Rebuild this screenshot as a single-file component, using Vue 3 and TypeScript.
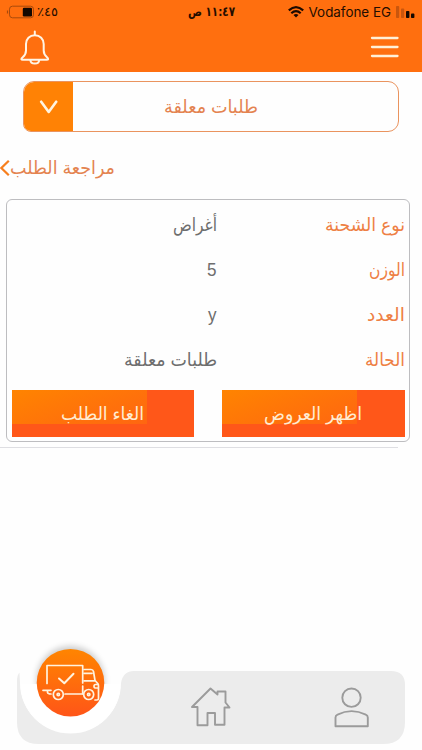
<script setup lang="ts">
import { h } from 'vue'

interface Row {
  label: string
  labelWidth: number
  value: string
  valueWidth: number
}

interface Action {
  text: string
  width: number
}

const rows: Row[] = [
  { label: 'نوع الشحنة', labelWidth: 80, value: 'أغراض', valueWidth: 44 },
  { label: 'الوزن', labelWidth: 36, value: '5', valueWidth: 9.5 },
  { label: 'العدد', labelWidth: 38, value: 'y', valueWidth: 8.5 },
  { label: 'الحالة', labelWidth: 40, value: 'طلبات معلقة', valueWidth: 93 },
]

const actions: Action[] = [
  { text: 'الغاء الطلب', width: 83 },
  { text: 'اظهر العروض', width: 98 },
]

// One line of text condensed or widened to a given width.
const FitText = (props: { text: string; width: number }) =>
  h('svg', { width: props.width, height: 30, overflow: 'visible', style: 'display:block;flex:none' }, [
    h(
      'text',
      {
        x: props.width / 2,
        y: 21,
        'text-anchor': 'middle',
        textLength: props.width,
        lengthAdjust: 'spacingAndGlyphs',
        fill: 'currentColor',
      },
      props.text,
    ),
  ])
FitText.props = ['text', 'width']
</script>

<template>
  <div class="screen">
    <header class="header">
      <div class="status">
        <div class="battery-group">
          <svg class="battery" width="28" height="14" viewBox="0 0 28 14">
            <path d="M1.500 5.5v3" stroke="#a84a0c" stroke-width="1.2" />
            <rect x="3.500" y="1.2" width="24" height="11.6" rx="3" fill="none" stroke="#a84a0c" stroke-width="1" />
            <rect x="16.800" y="2.8" width="9.2" height="8.6" rx="1.2" fill="#140800" />
          </svg>
          <FitText class="percent" text="٪٤٥" :width="21" />
        </div>
        <FitText class="clock" text="١١:٤٧ ص" :width="47" />
        <div class="carrier">
          <svg width="16" height="12" viewBox="0 0 16 12" fill="none" stroke="#1c0a00" stroke-width="2.2">
            <path d="M.8 4.4Q8-2 15.2 4.4" />
            <path d="M3.3 7.2Q8 3 12.7 7.2" />
            <path d="M5.5 9 8 11.6 10.5 9Q8 7 5.5 9Z" fill="#1c0a00" stroke="none" />
          </svg>
          <span class="network">Vodafone EG</span>
          <svg width="19" height="12" viewBox="0 0 19 12">
            <rect x="0" y="0" width="3.2" height="12" rx=".8" fill="#c9560d" />
            <rect x="5" y="2.5" width="3.2" height="9.5" rx=".8" fill="#c9560d" />
            <rect x="10" y="5" width="3.4" height="7" rx=".8" fill="#140800" />
            <rect x="15" y="7.6" width="3.4" height="4.4" rx=".8" fill="#140800" />
          </svg>
        </div>
      </div>
      <div class="toolbar">
        <svg width="30" height="36" viewBox="0 0 30 36" fill="none" stroke="#fff4e4" stroke-width="2" stroke-linecap="round" stroke-linejoin="round">
          <path d="M14.8 1.5v3.6M14.8 5.2C9.6 5.2 6 9 6 14v6.500C6 24 4.800 25.500 2.700 27.300C.6 29.200 1.200 29.700 2.800 29.700H26.600C28.400 29.700 28.800 29 27 27.300C24.800 25.300 23.700 23.500 23.700 20.500V14C23.700 9 20 5.200 14.800 5.200Z" />
          <path d="M10.400 30C10.600 34.800 19 34.800 19.200 30" />
        </svg>
        <svg width="30" height="22" viewBox="0 0 30 22" stroke="#fff0d8" stroke-width="2.300" stroke-linecap="round">
          <path d="M2 2H27.500M2 11H27.500M2 20H27.500" />
        </svg>
      </div>
    </header>

    <div class="select">
      <div class="select-toggle">
        <svg width="20" height="14" viewBox="0 0 20 14" fill="none" stroke="#fff4e0" stroke-width="2.600" stroke-linecap="round" stroke-linejoin="round">
          <path d="M2.200 1.700 9.700 12 17.200 1.700" />
        </svg>
      </div>
      <div class="select-text"><FitText text="طلبات معلقة" :width="94" /></div>
    </div>

    <div class="review">
      <svg width="10" height="16" viewBox="0 0 10 16" fill="none" stroke="#f77f1e" stroke-width="2.200">
        <path d="M8.800 .8 1.400 8 8.800 15.200" />
      </svg>
      <FitText text="مراجعة الطلب" :width="105" />
    </div>

    <section class="card">
      <div v-for="row in rows" :key="row.label" class="row">
        <FitText class="value" :text="row.value" :width="row.valueWidth" />
        <FitText class="label" :text="row.label" :width="row.labelWidth" />
      </div>
      <div class="actions">
        <button v-for="action in actions" :key="action.text" class="action">
          <FitText :text="action.text" :width="action.width" />
        </button>
      </div>
    </section>
    <div class="divider"></div>

    <nav class="tabs">
      <svg width="422" height="120" viewBox="0 630 422 120" fill="none">
        <defs>
          <linearGradient id="disc" x1="0" y1="0" x2="0" y2="1">
            <stop offset="0" stop-color="#ff8500" />
            <stop offset="1" stop-color="#ff5518" />
          </linearGradient>
          <filter id="glow" x="-30%" y="-30%" width="160%" height="160%">
            <feGaussianBlur stdDeviation="3" />
          </filter>
        </defs>
        <path fill="#ececec" d="M19.500 672.500C18 674 17 677 17 681V722Q17 744 39 744H383Q405 744 405 722V685Q405 671 391 671H134Q123 671 121 683A50.500 50.500 0 0 1 20 683Z" />
        <circle cx="70.500" cy="680" r="34" fill="#000" opacity=".2" filter="url(#glow)" />
        <path fill="#fff" d="M20.500 684H120.500A50 49 0 0 1 20.500 684Z" />
        <circle cx="70.500" cy="682.700" r="33.800" fill="url(#disc)" />
        <g stroke="#fff3df" stroke-width="1.700" stroke-linecap="round" stroke-linejoin="round">
          <path d="M47 683.500V665.500H82.700V683M82.700 686V694" />
          <path d="M84 669.500H91Q93 669.500 93.500 671.500L95 680.500 97.800 683.500Q98.500 684.500 98.500 686V698.500Q98.500 700 97 700H95M84 673.300H92M84 680.800H95M97.500 684.500H95.500Q94 684.500 94 686.300T96 688H98" />
          <path d="M43 690.300H51M47.500 690.300V692.500Q48 694 51 694M65 694H82" />
          <circle cx="58.300" cy="694.500" r="5" /><circle cx="58.300" cy="694.500" r="1.200" />
          <circle cx="88.700" cy="694.500" r="5" /><circle cx="88.700" cy="694.500" r="1.200" />
          <path d="M59 678.500 64.300 683.300 73.500 673.800" stroke-width="2" />
        </g>
        <g stroke="#9b9b9b" stroke-width="1.900" stroke-linejoin="round">
          <path d="M210.500 688.500 192 707H197.500V725.200H207.500V713H215V724.800H224.500V707.500H229.500L225.500 702.500V691.500H217.500V694.500Z" />
          <circle cx="351.500" cy="697.700" r="9.200" />
          <path d="M335.500 726.300V717.500Q335.500 715.500 337.500 714.600Q351.500 707.600 365.800 714.600Q367.800 715.500 367.800 717.500V726.300Z" />
        </g>
      </svg>
    </nav>
  </div>
</template>

<style>
body {
  background: #fefefe;
}
</style>

<style scoped>
.screen {
  width: 422px;
  height: 750px;
  display: flex;
  flex-direction: column;
  overflow: hidden;
  background: #fefefe;
  font-family: 'Liberation Sans', 'DejaVu Sans', sans-serif;
  font-size: 18px;
}
.header {
  height: 72px;
  flex: none;
  background: #ff6f0f;
  color: #240d00;
}
.status {
  height: 24px;
  display: grid;
  grid-template-columns: 140px 142px 140px;
  grid-template-rows: 24px;
  align-items: center;
}
.battery-group {
  display: flex;
  align-items: center;
  gap: 3px;
  padding-left: 6px;
}
.percent {
  font-family: 'DejaVu Sans', sans-serif;
  font-size: 13px;
  margin-top: -4px;
}
.clock {
  font-family: 'DejaVu Sans', sans-serif;
  font-size: 13px;
  font-weight: 700;
  justify-self: center;
  margin-top: -5px;
}
.carrier {
  display: flex;
  align-items: center;
  justify-content: flex-end;
  gap: 5px;
  padding-right: 7px;
  white-space: nowrap;
}
.network {
  font-family: Inter, sans-serif;
  font-size: 13.4px;
}
.toolbar {
  height: 48px;
  display: flex;
  justify-content: space-between;
  align-items: flex-start;
  padding: 6px 22px 0 20px;
}
.toolbar svg:last-child {
  margin-top: 6px;
}
.select {
  flex: none;
  height: 49px;
  margin: 9px 23px 0;
  border: 1px solid #ea945f;
  border-radius: 11px 11px 11px 8px;
  display: flex;
  overflow: hidden;
}
.select-toggle {
  width: 49px;
  display: flex;
  align-items: center;
  justify-content: center;
  background: #ff8205;
}
.select-text {
  width: 276px;
  display: flex;
  align-items: center;
  justify-content: center;
  color: #e48350;
}
.review {
  flex: none;
  height: 24px;
  margin-top: 24px;
  display: flex;
  align-items: center;
  color: #e48350;
}
.card {
  flex: none;
  box-sizing: border-box;
  width: 404px;
  height: 243px;
  margin: 19px 0 0 6px;
  border: 1px solid #bdbdc0;
  border-radius: 6px;
  padding: 2px 4.5px 0 4.5px;
}
.row {
  height: 45px;
  display: grid;
  grid-template-columns: 205px 1fr;
  align-items: center;
  justify-items: end;
}
.value {
  color: #6e6e6e;
}
.label {
  color: #ee8044;
}
.actions {
  display: flex;
  justify-content: space-between;
  margin-top: 8px;
}
.action {
  width: 182.5px;
  height: 47px;
  border: 0;
  padding: 0;
  display: flex;
  align-items: center;
  justify-content: center;
  color: #ffecd2;
  font: inherit;
  background: linear-gradient(160deg, #ff8400, #ff6611) 0 0 / 135px 34px no-repeat, #ff5719;
}
.divider {
  flex: none;
  width: 398px;
  height: 1px;
  margin-top: 5px;
  background: #dedee2;
}
.tabs {
  margin-top: auto;
  height: 120px;
}
.tabs svg {
  display: block;
}
</style>
